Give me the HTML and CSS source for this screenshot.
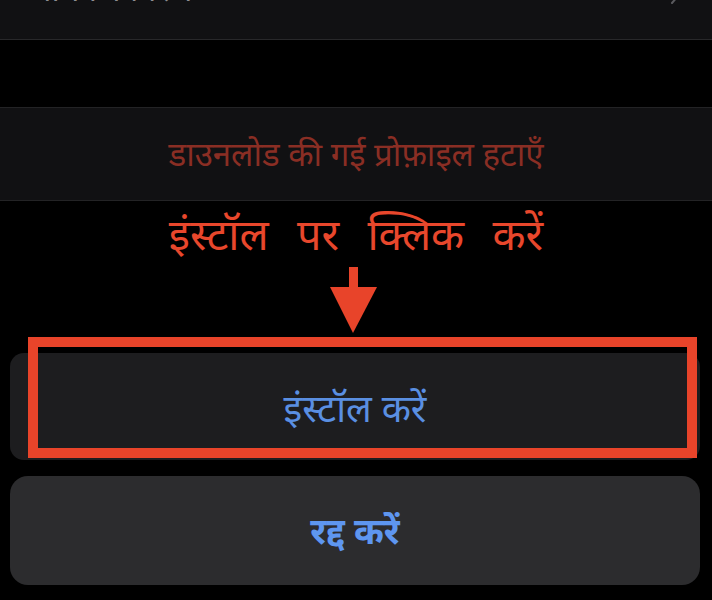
FILE: index.html
```html
<!DOCTYPE html>
<html lang="hi">
<head>
<meta charset="utf-8">
<title>प्रोफ़ाइल इंस्टॉल करें</title>
<link rel="stylesheet" href="styles.css">
</head>
<body>
<div class="screen">
  <div class="cell top-row">
    <span class="top-text">अधिक विवरण</span>
    <svg class="chev" width="10" height="16" viewBox="0 0 10 16"><path d="M2 1 L8 8 L2 15" fill="none" stroke="#5a5a5e" stroke-width="2" stroke-linecap="round" stroke-linejoin="round"/></svg>
  </div>
  <div class="spacer"></div>
  <div class="cell remove-row">
    <span class="remove-text">डाउनलोड की गई प्रोफ़ाइल हटाएँ</span>
  </div>
  <div class="annotation">
    <div class="note">इंस्टॉल&nbsp; पर&nbsp; क्लिक&nbsp; करें</div>
    <svg class="arrow" width="48" height="68" viewBox="0 0 48 68"><rect x="19" y="0" width="9" height="21" fill="#e8442a"/><polygon points="0,20 47,20 23,66" fill="#e8442a"/></svg>
  </div>
  <div class="install-area">
    <div class="btn install-btn">इंस्टॉल करें</div>
    <div class="highlight"></div>
  </div>
  <div class="btn cancel-btn">रद्द करें</div>
</div>
</body>
</html>
```
FILE: styles.css
```css
html, body {
  margin: 0;
  padding: 0;
  background: #000;
}
body {
  font-family: "Noto Sans", "Noto Sans Devanagari", "Lohit Devanagari", sans-serif;
  width: 712px;
  height: 600px;
  overflow: hidden;
}
.screen {
  display: flex;
  flex-direction: column;
}
.cell {
  background: #111113;
}
.top-row {
  height: 39px;
  border-bottom: 1px solid #28282a;
  display: flex;
  justify-content: space-between;
  align-items: flex-start;
  padding: 0 32px 0 27px;
  overflow: hidden;
}
.top-text {
  color: #8e8e92;
  font-size: 32px;
  line-height: 34px;
  margin-top: -28px;
}
.chev {
  margin-top: -12px;
}
.spacer {
  height: 67px;
}
.remove-row {
  height: 92px;
  border-top: 1px solid #232325;
  border-bottom: 1px solid #232325;
  display: flex;
  align-items: center;
  justify-content: center;
}
.remove-text {
  color: #8a2e24;
  font-size: 33px;
  line-height: 40px;
}
.annotation {
  height: 136px;
  display: flex;
  flex-direction: column;
  align-items: center;
}
.note {
  color: #e8472c;
  font-size: 43px;
  line-height: 50px;
  word-spacing: 3px;
  margin-top: 8px;
}
.arrow {
  margin-top: 8px;
  margin-left: -4px;
}
.install-area {
  position: relative;
  padding-top: 16px;
}
.btn {
  display: flex;
  align-items: center;
  justify-content: center;
  margin: 0 12px 0 10px;
}
.install-btn {
  height: 107px;
  background: #1d1d1f;
  border-radius: 14px;
  color: #5a8fe2;
  font-size: 38px;
}
.highlight {
  position: absolute;
  top: 0;
  left: 28px;
  right: 15px;
  height: 101px;
  border: 10px solid #e8442a;
}
.cancel-btn {
  margin-top: 16px;
  height: 109px;
  background: #2c2c2e;
  border-radius: 18px;
  color: #5e96f0;
  font-size: 36px;
  font-weight: bold;
}
```
